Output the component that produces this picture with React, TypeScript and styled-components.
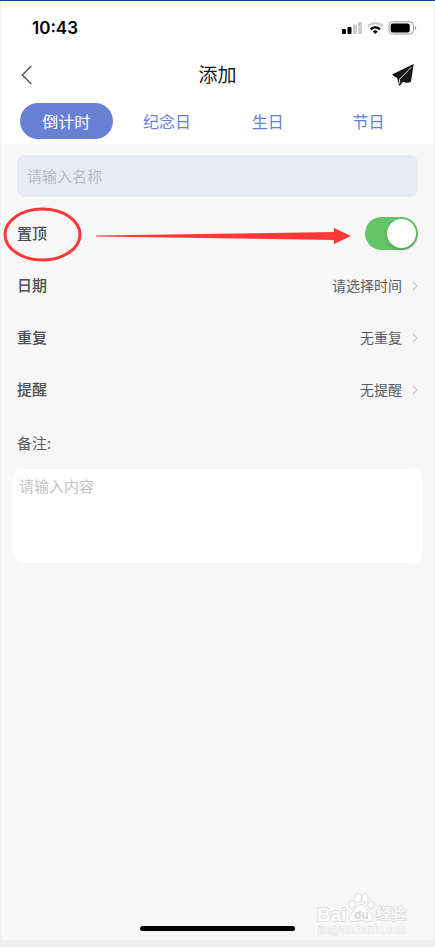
import React, { useState } from "react";
import styled, { createGlobalStyle } from "styled-components";

const GlobalStyle = createGlobalStyle`
  *, *::before, *::after { box-sizing: border-box; }
  body {
    margin: 0;
    background: #efefef;
    font-family: "Noto Sans CJK SC", "Liberation Sans", sans-serif;
  }
  button, input, textarea { font-family: inherit; }
`;

const Page = styled.div`
  min-height: 100vh;
  display: flex;
  flex-direction: column;
  border-top: 1px solid #0b4a91;
  padding: 0 1px 7px;
`;

const Screen = styled.main`
  position: relative;
  flex: 1;
  display: flex;
  flex-direction: column;
  background: #f7f7f7;
`;

const Header = styled.header`
  display: flex;
  flex-direction: column;
  background: #fff;
  padding-bottom: 5px;
`;

const StatusBar = styled.div`
  display: flex;
  align-items: center;
  justify-content: space-between;
  height: 54px;
  padding: 0 17px 0 31px;
`;

const Clock = styled.time`
  font: 600 17px/20px Inter, sans-serif;
  color: #000;
`;

const NavBar = styled.nav`
  display: grid;
  grid-template-columns: 48px 1fr 48px;
  align-items: center;
  height: 40px;
`;

const Title = styled.h1`
  margin: 0;
  padding-bottom: 2px;
  text-align: center;
  font-size: 19px;
  font-weight: 400;
  line-height: 28px;
  color: #1a1a1a;
`;

const IconButton = styled.button<{ $end?: boolean }>`
  display: flex;
  align-items: center;
  justify-content: ${(p) => (p.$end ? "flex-end" : "flex-start")};
  height: 40px;
  border: 0;
  padding: ${(p) => (p.$end ? "0 20px 0 0" : "0 0 0 20px")};
  background: none;
`;

const Tabs = styled.div`
  display: grid;
  grid-template-columns: repeat(4, 1fr);
  gap: 8px;
  padding: 0 19px;
  margin-top: 8px;
`;

const Tab = styled.button<{ $active: boolean }>`
  height: 36px;
  border: 0;
  padding: 0;
  border-radius: 18px;
  font-size: 16px;
  line-height: 24px;
  color: ${(p) => (p.$active ? "#fff" : "#6880d4")};
  background: ${(p) => (p.$active ? "#6880d4" : "none")};
`;

const Form = styled.form`
  display: flex;
  flex-direction: column;
  padding: 11px 16px 0;
`;

const NameInput = styled.input`
  height: 42px;
  border: 0;
  border-radius: 8px;
  padding: 0 10px 2px;
  margin-bottom: 10px;
  font-size: 15px;
  color: #4a4c55;
  background: #e8ebf4;
  &::placeholder { color: #b7bac4; opacity: 1; }
`;

const ToggleRow = styled.label`
  display: flex;
  align-items: center;
  justify-content: space-between;
  height: 53px;
`;

const Caption = styled.span`
  padding-bottom: 2px;
  font-size: 15px;
  font-weight: 500;
  line-height: 22px;
  color: #4b4d55;
`;

const Switch = styled.input`
  appearance: none;
  display: flex;
  align-items: center;
  width: 53px;
  height: 33px;
  margin: 0;
  padding: 0 2px;
  border-radius: 17px;
  background: #dcdcdc;
  &::before {
    content: "";
    width: 29px;
    height: 29px;
    border-radius: 50%;
    background: #fff;
    box-shadow: 0 2px 4px rgba(0, 0, 0, 0.2);
  }
  &:checked { background: #65c466; justify-content: flex-end; }
`;

const PickerRow = styled.button`
  display: flex;
  align-items: center;
  height: 52px;
  border: 0;
  padding: 0;
  background: none;
`;

const PickerValue = styled.span`
  margin-left: auto;
  margin-right: 10px;
  padding-bottom: 2px;
  font-size: 14px;
  line-height: 20px;
  color: #5b5d63;
`;

const NoteLabel = styled.label`
  display: flex;
  align-items: center;
  height: 53px;
  font-size: 15px;
  color: #5b5d63;
`;

const NoteBox = styled.textarea`
  height: 94px;
  margin: 0 -4px;
  border: 0;
  border-radius: 9px;
  padding: 6px;
  resize: none;
  font-size: 15px;
  line-height: 22px;
  color: #4a4c55;
  background: #fff;
  &::placeholder { color: #c2c2c2; opacity: 1; }
`;

const HomeIndicator = styled.div`
  width: 155px;
  height: 5px;
  margin: auto auto 9px;
  border-radius: 3px;
  background: #000;
`;

const Ring = styled.svg`
  position: absolute;
  left: 2px;
  top: 206px;
  pointer-events: none;
`;

const Arrow = styled.svg`
  position: absolute;
  left: 95px;
  top: 226px;
  width: calc(100% - 178px);
  height: 18px;
  pointer-events: none;
`;

const Watermark = styled.svg`
  position: absolute;
  right: 22px;
  bottom: 0;
  pointer-events: none;
`;

function StatusIcons() {
  return (
    <svg width="76" height="16" viewBox="341 20 76 16" aria-hidden="true">
      <rect x="342" y="29" width="4" height="5" rx="1" />
      <rect x="347.5" y="27" width="4" height="7" rx="1" />
      <rect x="353" y="24.500" width="4" height="9.500" rx="1" fill="#cdcdcd" />
      <rect x="358" y="22" width="4" height="12" rx="1" fill="#cdcdcd" />
      <g fill="none" strokeWidth="2.400">
        <path d="M367.800 26.200a10.600 10.600 0 0 1 15 0" stroke="#cdcdcd" />
        <path d="M370.700 29.300a6.500 6.500 0 0 1 9.200 0" stroke="#000" />
      </g>
      <path d="M372.900 31.400a3.600 3.600 0 0 1 4.800 0L375.300 34z" />
      <rect x="389" y="21.800" width="24.500" height="12.200" rx="3.600" fill="none" stroke="#999" />
      <rect x="390.700" y="23.400" width="19" height="9" rx="2" />
      <path d="M414.900 26v4q1.400-.6 1.400-2t-1.400-2z" fill="#999" />
    </svg>
  );
}

function Chevron() {
  return (
    <svg width="6" height="10" viewBox="0 0 6 10" fill="none" stroke="#c8c8c8" strokeWidth="1.300" aria-hidden="true">
      <path d="M.8.8 5 5 .8 9.200" />
    </svg>
  );
}

const tabNames = ["倒计时", "纪念日", "生日", "节日"];
const pickers = [
  { name: "日期", value: "请选择时间" },
  { name: "重复", value: "无重复" },
  { name: "提醒", value: "无提醒" },
];

export default function App() {
  const [active, setActive] = useState(0);
  const [pinned, setPinned] = useState(true);

  return (
    <>
      <GlobalStyle />
      <Page>
        <Screen>
          <Header>
            <StatusBar>
              <Clock>10:43</Clock>
              <StatusIcons />
            </StatusBar>
            <NavBar>
              <IconButton type="button" aria-label="返回">
                <svg width="12" height="20" viewBox="0 0 12 20" fill="none" stroke="#555" strokeWidth="1.400">
                  <path d="M10.300 1 1.300 10l9 9" />
                </svg>
              </IconButton>
              <Title>添加</Title>
              <IconButton type="button" $end aria-label="提交">
                <svg width="22" height="22" viewBox="0 0 22 22" fill="#17181a">
                  <path d="M21.700 0 0 10.500q2.500 2.400 5.200 3.500l1.800 7.400q.9.200 1.500-.5l2.500-3.200 2.800 1q3 .4 5.200-.9z" />
                  <path d="M19.500 3 7.500 15.300l.2 4.200" fill="none" stroke="#fff" strokeWidth=".9" />
                </svg>
              </IconButton>
            </NavBar>
            <Tabs role="tablist">
              {tabNames.map((name, i) => (
                <Tab key={name} type="button" role="tab" aria-selected={i === active} $active={i === active} onClick={() => setActive(i)}>
                  {name}
                </Tab>
              ))}
            </Tabs>
          </Header>
          <Form onSubmit={(e) => e.preventDefault()}>
            <NameInput type="text" aria-label="名称" placeholder="请输入名称" />
            <ToggleRow>
              <Caption>置顶</Caption>
              <Switch type="checkbox" role="switch" checked={pinned} onChange={(e) => setPinned(e.target.checked)} />
            </ToggleRow>
            {pickers.map((p) => (
              <PickerRow key={p.name} type="button">
                <Caption>{p.name}</Caption>
                <PickerValue>{p.value}</PickerValue>
                <Chevron />
              </PickerRow>
            ))}
            <NoteLabel htmlFor="note">备注:</NoteLabel>
            <NoteBox id="note" placeholder="请输入内容" />
          </Form>
          <HomeIndicator />
          <Ring width="80" height="56" viewBox="0 0 80 56" aria-hidden="true">
            <ellipse cx="39.500" cy="27.500" rx="37.500" ry="25.500" fill="none" stroke="#fb3737" strokeWidth="3" />
          </Ring>
          <Arrow viewBox="0 0 255 18" preserveAspectRatio="none" aria-hidden="true">
            <path d="M0 8.500 238 5V1l17 8-17 8v-4L0 9.500z" fill="#fb3737" />
          </Arrow>
          <Watermark width="96" height="50" viewBox="0 0 96 50" aria-hidden="true">
            <g fill="#fdfdfd" stroke="#dedede" strokeWidth="1.800" paintOrder="stroke">
              <text x="1" y="31" fontFamily="Liberation Sans, sans-serif" fontWeight="700" fontSize="19">Bai</text>
              <text x="60" y="29" fontFamily="Noto Sans CJK SC, sans-serif" fontWeight="500" fontSize="15">经验</text>
              <text x="2" y="43" fontFamily="Liberation Sans, sans-serif" fontSize="11" strokeWidth="1">jingyan.baidu.com</text>
            </g>
            <g fill="#fdfdfd" stroke="#dedede">
              <ellipse cx="36" cy="14.500" rx="3.200" ry="4" />
              <ellipse cx="42" cy="8" rx="3.300" ry="4.600" />
              <ellipse cx="49" cy="8" rx="3.300" ry="4.600" />
              <ellipse cx="55" cy="15" rx="3.200" ry="4" />
              <path d="M45 14.500c4 0 5 4 8 7 5 4 5 10 0 10-3 0-5-.8-8-.8s-5 .8-8 .8c-5 0-5-6 0-10 3-3 4-7 8-7z" />
            </g>
            <text x="38" y="29" fontFamily="Liberation Sans, sans-serif" fontWeight="700" fontSize="12" fill="#d6d6d6">du</text>
          </Watermark>
        </Screen>
      </Page>
    </>
  );
}
